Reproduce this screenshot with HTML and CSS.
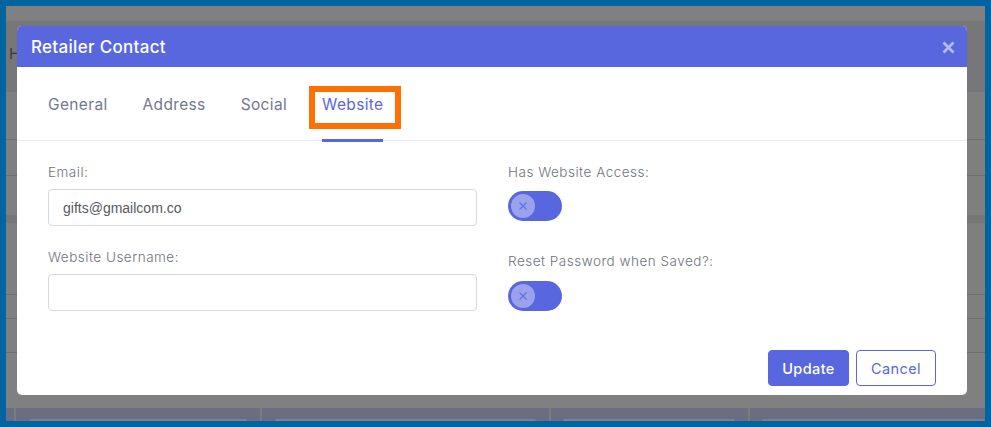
FILE: index.html
```html
<!DOCTYPE html>
<html lang="en">
<head>
<meta charset="utf-8">
<title>Retailer Contact</title>
<link rel="stylesheet" href="styles.css">
</head>
<body>
<div class="frame">
  <div class="screen">
    <div class="bg-topbar"></div>
    <div class="bg-head"><span class="bg-title">H</span></div>
    <div class="bg-row bg-row-a"></div>
    <div class="bg-row bg-row-b"></div>
    <div class="bg-row bg-row-c"></div>
    <div class="bg-band"></div>
    <div class="bg-row bg-row-d"></div>
    <div class="bg-row bg-row-e"></div>
    <div class="bg-row bg-row-f"></div>
    <div class="bg-row bg-row-g"></div>
    <div class="bg-cards">
      <div class="bg-card c1"></div>
      <div class="bg-card c2"><span></span></div>
      <div class="bg-card c3"><span></span></div>
      <div class="bg-card c4"><span></span></div>
      <div class="bg-card c5"><span></span></div>
    </div>

    <div class="modal">
      <div class="modal-header">
        <h5 class="modal-title">Retailer Contact</h5>
        <button class="close" aria-label="Close">
          <svg width="13" height="13" viewBox="0 0 13 13"><path d="M1.5 1.5L11.5 11.5M11.5 1.5L1.5 11.5" stroke="currentColor" stroke-width="2.8"/></svg>
        </button>
      </div>
      <ul class="tabs">
        <li class="tab">General</li>
        <li class="tab">Address</li>
        <li class="tab">Social</li>
        <li class="tab active">Website</li>
      </ul>
      <div class="modal-body">
        <div class="col">
          <label class="label">Email:</label>
          <div class="input">gifts@gmailcom.co</div>
          <label class="label second">Website Username:</label>
          <div class="input"></div>
        </div>
        <div class="col">
          <label class="label">Has Website Access:</label>
          <div class="switch"><span class="knob"><svg width="10" height="10" viewBox="0 0 10 10"><path d="M1.5 1.5L8.5 8.5M8.5 1.5L1.5 8.5" stroke="#5f6de0" stroke-width="1.1"/></svg></span></div>
          <label class="label second-r">Reset Password when Saved?:</label>
          <div class="switch"><span class="knob"><svg width="10" height="10" viewBox="0 0 10 10"><path d="M1.5 1.5L8.5 8.5M8.5 1.5L1.5 8.5" stroke="#5f6de0" stroke-width="1.1"/></svg></span></div>
        </div>
      </div>
      <div class="modal-footer">
        <button class="btn btn-primary">Update</button>
        <button class="btn btn-outline">Cancel</button>
      </div>
    </div>
    <div class="highlight"></div>
  </div>
</div>
</body>
</html>
```

FILE: styles.css
```css
* { box-sizing: border-box; }
html, body { margin: 0; padding: 0; }
body {
  background: #0064a0;
  font-family: "Inter", "Open Sans", sans-serif;
}
.frame {
  width: 991px;
  height: 427px;
  padding: 6px;
  background: #0064a0;
}
.screen {
  position: relative;
  width: 979px;
  height: 415px;
  background: #808080;
  overflow: hidden;
}
.bg-topbar { height: 15px; background: #808080; }
.bg-head {
  height: 71px;
  background: #777779;
  display: flex;
  align-items: center;
  padding-left: 3px;
  padding-bottom: 7px;
}
.bg-title { color: #3a3a3a; font-size: 15px; }
.bg-row { border-bottom: 1px solid #6e6e6e; background: #7f7f7f; }
.bg-row-a { height: 48px; }
.bg-row-b { height: 36px; }
.bg-row-c { height: 39px; border-bottom: 0; }
.bg-band { height: 8px; background: #767676; }
.bg-row-d { height: 72px; }
.bg-row-e { height: 24px; }
.bg-row-f { height: 34px; }
.bg-row-g { height: 55px; border-bottom: 0; background: #808080; }
.bg-cards {
  display: flex;
  height: 13px;
  gap: 2px;
  background: #7c7c7c;
}
.bg-card {
  background: #6b6d80;
  display: flex;
  flex-direction: column;
  justify-content: flex-end;
  padding: 0 13px;
}
.bg-card span { display: block; height: 2px; background: #7e8090; border-radius: 2px 2px 0 0; }
.c1 { width: 8px; padding: 0; }
.c2 { width: 244px; }
.c3 { width: 287px; }
.c4 { width: 197px; padding: 0 13px 0 12px; }
.c5 { flex: 1; padding: 0 0 0 12px; }

.modal {
  position: absolute;
  left: 11px;
  top: 20px;
  width: 950px;
  height: 369px;
  background: #fff;
  border-radius: 5px;
  overflow: hidden;
  display: flex;
  flex-direction: column;
}
.modal-header {
  height: 41px;
  background: #5867dd;
  display: flex;
  align-items: center;
  justify-content: space-between;
  padding: 0 12px 0 14px;
}
.modal-title {
  margin: 0;
  color: #fff;
  font-size: 17px;
  font-weight: 500;
  letter-spacing: 0.3px;
}
.close {
  border: 0;
  background: transparent;
  padding: 0;
  color: rgba(255,255,255,0.55);
  display: flex;
  margin-top: 2px;
}
.tabs {
  list-style: none;
  margin: 0;
  padding: 0 31px;
  height: 74px;
  display: flex;
  gap: 35px;
  border-bottom: 1px solid #ebedf2;
}
.tab {
  position: relative;
  display: flex;
  align-items: center;
  font-size: 15.5px;
  letter-spacing: 0.35px;
  color: #74788d;
  padding-top: 2px;
}
.tab.active { color: #5867dd; }
.tab.active::after {
  content: "";
  position: absolute;
  left: 0;
  right: 0;
  bottom: -2px;
  height: 3px;
  background: #5867dd;
}
.modal-body {
  display: grid;
  grid-template-columns: 429px 429px;
  column-gap: 31px;
  padding: 21px 31px 0;
}
.col { display: flex; flex-direction: column; align-items: flex-start; }
.label {
  display: block;
  font-size: 13.5px;
  font-weight: 300;
  letter-spacing: 0.5px;
  color: #6f727d;
  line-height: 20px;
}
.input {
  width: 100%;
  height: 37px;
  margin-top: 7px;
  border: 1px solid #d6d8e1;
  border-radius: 4px;
  padding: 0 14px;
  display: flex;
  align-items: center;
  font-family: "Liberation Sans", Arial, sans-serif;
  font-size: 14px;
  color: #575962;
}
.label.second { margin-top: 21px; }
.switch {
  margin-top: 9px;
  width: 54px;
  height: 30px;
  border-radius: 15px;
  background: #5867dd;
  padding: 3px;
  display: flex;
  align-items: center;
}
.knob {
  width: 24px;
  height: 24px;
  border-radius: 50%;
  background: #9aa2ee;
  display: flex;
  align-items: center;
  justify-content: center;
}
.label.second-r { margin-top: 30px; }
.label.second-r + .switch { margin-top: 10px; }
.modal-footer {
  margin-top: auto;
  display: flex;
  justify-content: flex-end;
  gap: 7px;
  padding: 0 31px 9px;
}
.btn {
  height: 36px;
  border-radius: 4px;
  font-family: "Inter", sans-serif;
  font-size: 14.5px;
  font-weight: 500;
  letter-spacing: 0.4px;
  padding: 0;
}
.btn-primary {
  width: 81px;
  background: #5867dd;
  border: 1px solid #5867dd;
  color: #fff;
}
.btn-outline {
  width: 80px;
  background: #fff;
  border: 1px solid #5867dd;
  color: #5867dd;
  font-weight: 400;
}
.highlight {
  position: absolute;
  left: 303px;
  top: 80px;
  width: 92px;
  height: 43px;
  border: 6px solid #ff7000;
}
```
